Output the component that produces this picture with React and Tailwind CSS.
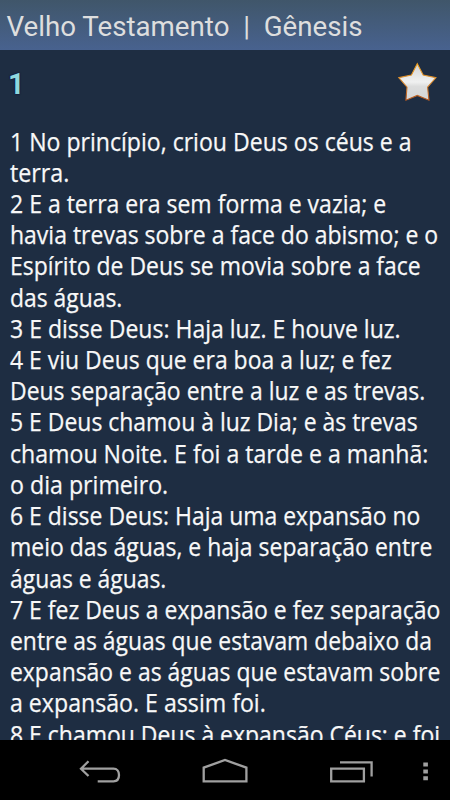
import React, { useLayoutEffect, useRef, useState } from 'react';

// text and set width of every line
const LINES = [
  ['1 No princípio, criou Deus os céus e a', 401.5],
  ['terra.', 59.5],
  ['2 E a terra era sem forma e vazia; e', 376.5],
  ['havia trevas sobre a face do abismo; e o', 428.5],
  ['Espírito de Deus se movia sobre a face', 411],
  ['das águas.', 112.5],
  ['3 E disse Deus: Haja luz. E houve luz.', 390.5],
  ['4 E viu Deus que era boa a luz; e fez', 382],
  ['Deus separação entre a luz e as trevas.', 415.5],
  ['5 E Deus chamou à luz Dia; e às trevas', 407.5],
  ['chamou Noite. E foi a tarde e a manhã:', 418],
  ['o dia primeiro.', 158.5],
  ['6 E disse Deus: Haja uma expansão no', 410.5],
  ['meio das águas, e haja separação entre', 422.5],
  ['águas e águas.', 156.5],
  ['7 E fez Deus a expansão e fez separação', 430],
  ['entre as águas que estavam debaixo da', 422],
  ['expansão e as águas que estavam sobre', 430],
  ['a expansão. E assim foi.', 255.5],
  ['8 E chamou Deus à expansão Céus; e foi', 430],
];

const Line = ({ text, width }) => {
  const ref = useRef(null);
  const [scale, setScale] = useState(0.93);

  useLayoutEffect(() => {
    const fit = () => setScale(width / ref.current.offsetWidth);
    fit();
    document.fonts.ready.then(fit);
  }, [width]);

  return (
    <p ref={ref} className="w-max whitespace-nowrap origin-left" style={{ transform: `scaleX(${scale})` }}>
      {text}
    </p>
  );
};

const StarIcon = () => (
  <svg width="42" height="42" viewBox="0 0 42 42" className="shrink-0">
    <defs>
      <linearGradient id="star-fill" x1="0" y1="0" x2="0" y2="1">
        <stop offset="0" stopColor="#d2d4d6" />
        <stop offset="0.5" stopColor="#f0f1f1" />
        <stop offset="0.62" stopColor="#dcdddd" />
        <stop offset="1" stopColor="#d4d5d6" />
      </linearGradient>
      <linearGradient id="star-edge" x1="0" y1="0" x2="0" y2="1">
        <stop offset="0" stopColor="#f0a01c" />
        <stop offset="0.5" stopColor="#d98a30" />
        <stop offset="1" stopColor="#b4561e" />
      </linearGradient>
    </defs>
    <path
      d="M21.3 2.8L27.2 14L39.9 16.7L31.6 26.2L33 39.2L21.3 34.4L9.9 39.2L11 26.2L2.8 16.7L15.4 14Z"
      fill="url(#star-fill)"
      stroke="url(#star-edge)"
      strokeWidth="1.1"
    />
  </svg>
);

const Header = () => (
  <header className="h-[50px] shrink-0 px-[6.5px] bg-linear-to-b from-[#40566a] to-[#48628f] text-[#dedede]">
    <h1 className="font-['Roboto'] text-[27.7px] leading-[54px] whitespace-pre">Velho Testamento  |  Gênesis</h1>
  </header>
);

const ChapterBar = () => (
  <div className="h-[75px] shrink-0 flex items-start justify-between pl-[8px] pr-[12px]">
    <span className="mt-[18px] font-['Roboto'] font-bold text-[29px] leading-[32px] text-[#8fd9de] [text-shadow:0_0_2px_#000030]">1</span>
    <div className="mt-[11px]">
      <StarIcon />
    </div>
  </div>
);

const NavBar = () => (
  <nav className="h-[60px] shrink-0 bg-black">
    <svg width="450" height="60" viewBox="0 0 450 60" fill="none" stroke="#a0a0a0" strokeWidth="2.3">
      {/* back */}
      <path d="M80.5 28.7H113.5C117 28.7 119 31.5 119 35C119 38.8 117 41.3 113.5 41.3H97.7M88.5 21.3L81 28.7L88.5 36" />
      {/* home */}
      <path d="M203.7 41.3V27.6L225 20L246.4 27.6V41.3Z" />
      {/* recent apps */}
      <path d="M331.2 28.7H363.9V41.3H331.2Z" />
      <path d="M340 22.3H371.6V36.5" />
      <path d="M423.3 22.4h4.6v4h-4.6zM423.3 29.4h4.6v4h-4.6zM423.3 36.2h4.6v4h-4.6z" fill="#a0a0a0" stroke="none" />
    </svg>
  </nav>
);

export default function App() {
  return (
    <div className="w-[450px] h-[800px] flex flex-col overflow-hidden bg-[#1e2d42]">
      <Header />
      <ChapterBar />
      <main className="flex-1 min-h-0 overflow-hidden pt-[0.5px] pl-[9.5px] font-['Open_Sans'] text-[25px] leading-[31.22px] text-[#f8f8f8] [-webkit-text-stroke:0.25px_#f8f8f8]">
        {LINES.map(([text, width]) => (
          <Line key={text} text={text} width={width} />
        ))}
      </main>
      <NavBar />
    </div>
  );
}
